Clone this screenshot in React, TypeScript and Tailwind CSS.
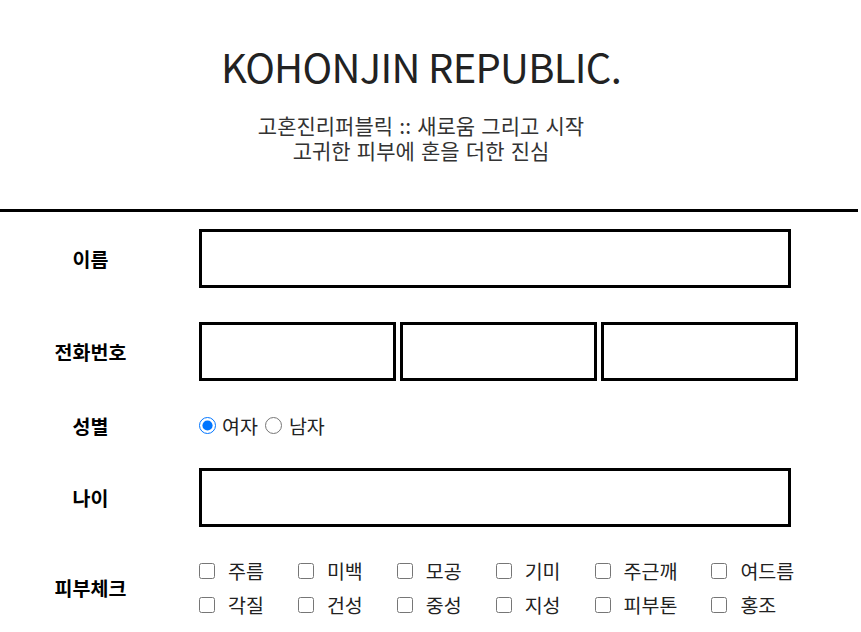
import React, { useState } from 'react';

const skinRows = [
  ['주름', '미백', '모공', '기미', '주근깨', '여드름'],
  ['각질', '건성', '중성', '지성', '피부톤', '홍조'],
];

function Label({ children }: { children: React.ReactNode }) {
  return (
    <div className="w-[181px] shrink-0 text-center text-[19.5px] font-bold text-black leading-[24px]">
      {children}
    </div>
  );
}

export default function App() {
  const [gender, setGender] = useState('female');
  const [checked, setChecked] = useState<Record<string, boolean>>({});

  const toggle = (name: string) => setChecked({ ...checked, [name]: !checked[name] });

  return (
    <div className="w-[861px] bg-white font-['Noto_Sans_CJK_KR','Noto_Sans',sans-serif] text-[#222]">
      {/* header */}
      <div className="w-[842px] pt-[42px] text-center">
        <h1 className="text-[40px] leading-[48px] font-normal text-[#222] tracking-[-0.7px]">KOHONJIN REPUBLIC.</h1>
        <div className="mt-[23px] text-[21px] leading-[25px] text-[#333] [word-spacing:1.5px]">
          <p>고혼진리퍼블릭 :: 새로움 그리고 시작</p>
          <p>고귀한 피부에 혼을 더한 진심</p>
        </div>
      </div>

      <div className="mt-[46px] h-[3px] w-[858px] bg-black" />

      <form className="pb-[10px]">
        {/* name */}
        <div className="mt-[17px] flex items-center">
          <Label>이름</Label>
          <input type="text" className="ml-[18px] h-[59px] w-[592px] border-[3px] border-black bg-white outline-none" />
        </div>

        {/* phone */}
        <div className="mt-[34px] flex items-center">
          <Label>전화번호</Label>
          <div className="ml-[18px] flex gap-[4px]">
            <input type="text" className="h-[59px] w-[197px] border-[3px] border-black bg-white outline-none" />
            <input type="text" className="h-[59px] w-[197px] border-[3px] border-black bg-white outline-none" />
            <input type="text" className="h-[59px] w-[197px] border-[3px] border-black bg-white outline-none" />
          </div>
        </div>

        {/* gender */}
        <div className="mt-[32px] flex h-[25px] items-center">
          <Label>성별</Label>
          <div className="ml-[18px] flex items-center text-[19.5px] text-[#222]">
            <input
              type="radio"
              name="gender"
              checked={gender === 'female'}
              onChange={() => setGender('female')}
              className="m-0 h-[17px] w-[17px]"
            />
            <span className="ml-[6px]">여자</span>
            <input
              type="radio"
              name="gender"
              checked={gender === 'male'}
              onChange={() => setGender('male')}
              className="m-0 ml-[7px] h-[17px] w-[17px]"
            />
            <span className="ml-[7px]">남자</span>
          </div>
        </div>

        {/* age */}
        <div className="mt-[30px] flex items-center">
          <Label>나이</Label>
          <input type="text" className="ml-[18px] h-[59px] w-[592px] border-[3px] border-black bg-white outline-none" />
        </div>

        {/* skin check */}
        <div className="mt-[27px] flex items-center">
          <Label>피부체크</Label>
          <div className="ml-[18px] flex flex-col">
            {skinRows.map((row, i) => (
              <div key={i} className="flex h-[34px] items-center">
                {row.map((name) => (
                  <label key={name} className="mr-[34px] flex items-center text-[19.5px] text-[#222]">
                    <input
                      type="checkbox"
                      checked={!!checked[name]}
                      onChange={() => toggle(name)}
                      className="m-0 h-[16px] w-[16px]"
                    />
                    <span className="ml-[13px] leading-[24px]">{name}</span>
                  </label>
                ))}
              </div>
            ))}
          </div>
        </div>
      </form>
    </div>
  );
}
